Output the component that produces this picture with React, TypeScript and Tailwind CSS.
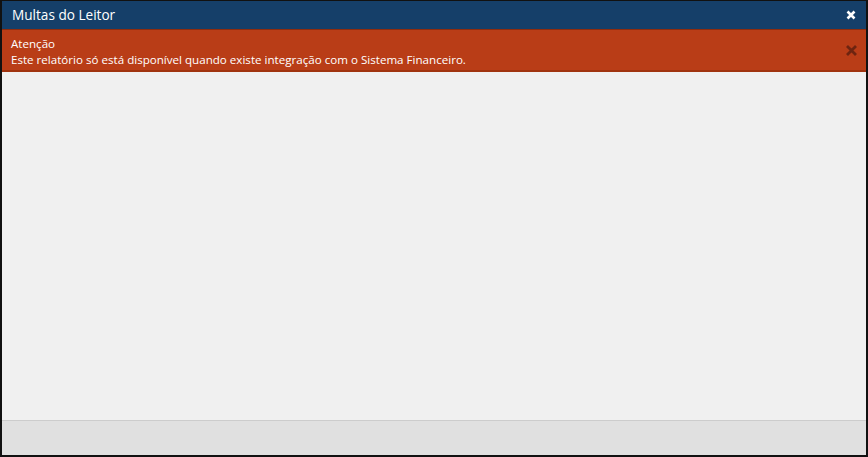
import React from 'react';

const FONT = { fontFamily: '"Open Sans", "Noto Sans", sans-serif' };

export default function App() {
  return (
    <div
      className="w-[868px] h-[457px] flex flex-col bg-[#f0f0f0] border-t border-l-2 border-r-2 border-b-2 border-[#111111] overflow-hidden"
      style={FONT}
    >
      <div className="h-[28px] shrink-0 flex items-center justify-between bg-[#153f69] pl-[10px] pr-[10px]">
        <span className="text-white text-[13.6px] leading-none">Multas do Leitor</span>
        <button className="text-white">
          <svg width="10" height="10" viewBox="0 0 10 10">
            <path d="M1.5 1.5 L8.5 8.5 M8.5 1.5 L1.5 8.5" stroke="currentColor" strokeWidth="2.6" />
          </svg>
        </button>
      </div>

      <div className="h-[43px] shrink-0 flex items-start justify-between bg-[#b93d17] border-t border-[#8e2c0e] border-b-2 border-b-[#a0330f] pl-[9px] pr-[8px] pt-[6px]">
        <div className="text-white text-[11.6px] leading-[16px]">
          <div>Atenção</div>
          <div>Este relatório só está disponível quando existe integração com o Sistema Financeiro.</div>
        </div>
        <button className="text-[#6e2410] mt-[8px]">
          <svg width="13" height="13" viewBox="0 0 13 13">
            <path d="M2 2 L11 11 M11 2 L2 11" stroke="currentColor" strokeWidth="2.8" />
          </svg>
        </button>
      </div>

      <div className="flex-1" />

      <div className="h-[35px] shrink-0 bg-[#e0e0e0] border-t border-[#cccccc]" />
    </div>
  );
}
